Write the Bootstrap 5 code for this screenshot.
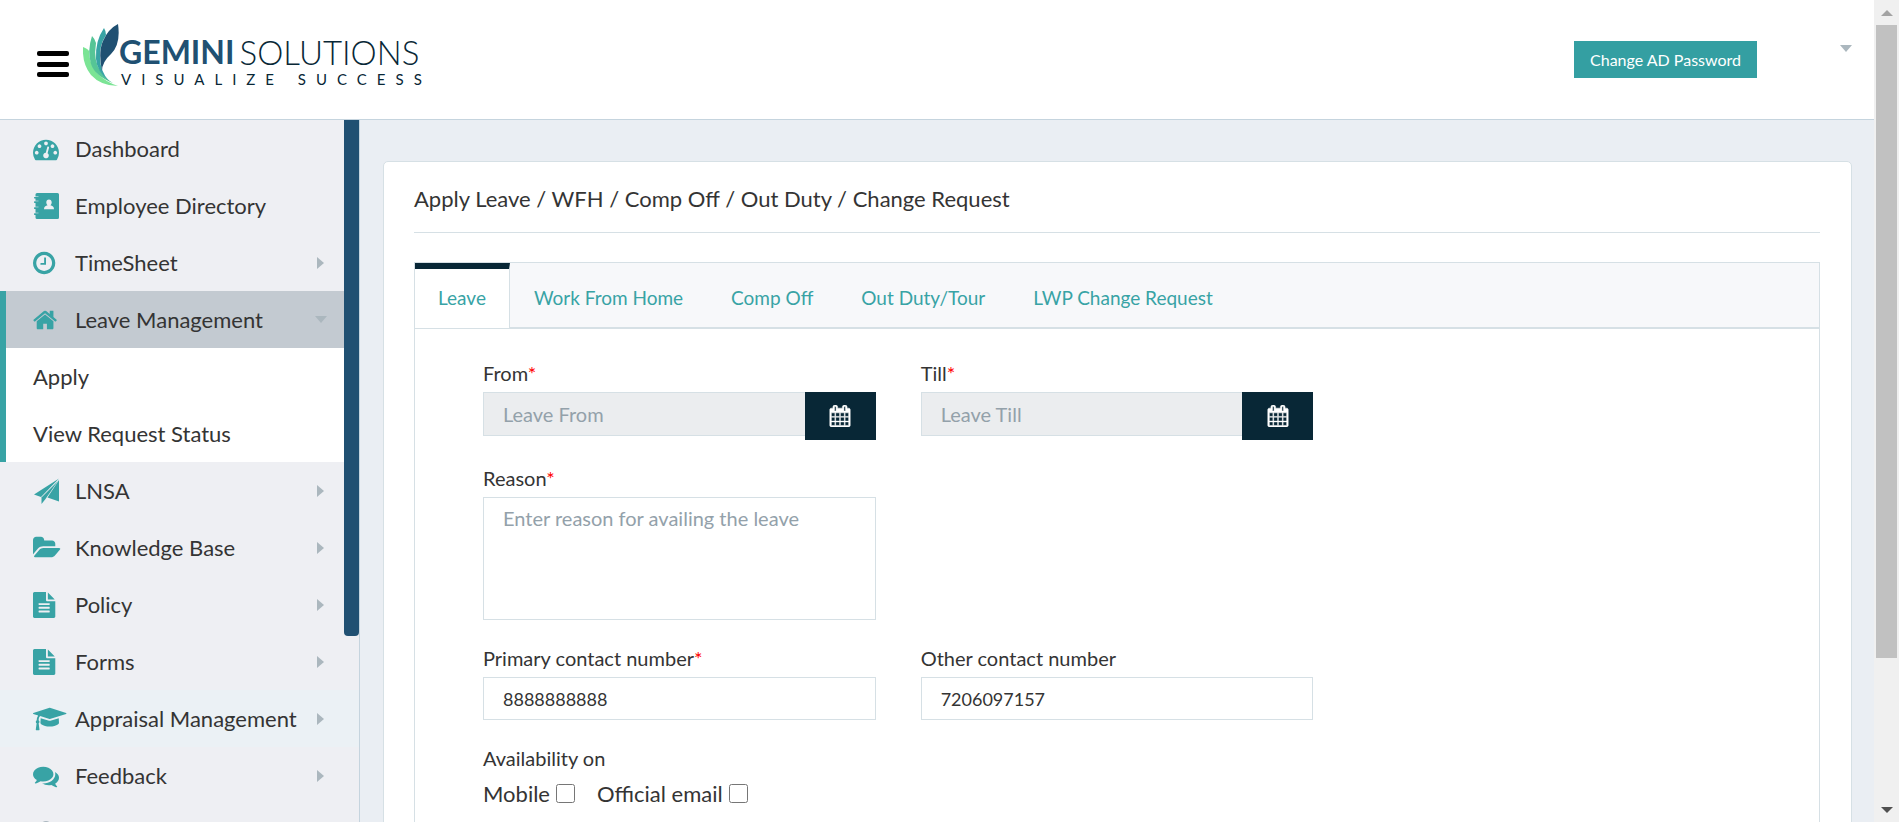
<!DOCTYPE html>
<html lang="en">
<head>
<meta charset="utf-8">
<meta name="viewport" content="width=device-width, initial-scale=1">
<title>Apply Leave - Gemini Solutions</title>
<link href="https://cdn.jsdelivr.net/npm/bootstrap@5.3.0/dist/css/bootstrap.min.css" rel="stylesheet">
<style>
  :root { --teal:#38a3a5; --navy:#205072; --ink:#082736; --line:#d6e0e5; --muted:#abb7be; }
  body { font-family:Lato,"Liberation Sans",sans-serif; font-size:22px; line-height:30px; color:#343434; background:#eaeef3; }
  a { text-decoration:none; color:inherit; }
  .topbar { height:120px; background:#fff; border-bottom:1px solid #c5d4de; padding:0 22px 0 37px; }
  .burger { margin-top:51px; width:32px; height:26px; border:0; background:none; }
  .burger span { height:5px; border-radius:2px; background:#000; }
  .brand { margin:24px 0 0 14px; }
  .brand-leaf { width:36px; height:62px; }
  .brand-name { margin-top:10px; font-size:32px; line-height:36px; color:var(--ink); font-weight:300; gap:5px; }
  .brand-name b { color:var(--navy); font-weight:700; }
  .brand-name span { font-size:33px; }
  .brand-tag { font-size:15px; line-height:18px; letter-spacing:10px; color:var(--ink); padding-left:2px; }
  .btn-ad { margin-top:41px; height:37px; padding:0 16px; border:0; border-radius:0; background:#349fa2; color:#fff; font-size:16px; line-height:35px; }
  .btn-ad:hover { background:#2b8b8e; color:#fff; }
  .user-menu { margin:45px 0 0 83px; height:8px; }
  .caret-d { width:0; height:0; border:6px solid transparent; border-bottom:0; border-top:7px solid var(--muted); }
  .caret-r { width:0; height:0; border:6px solid transparent; border-right:0; border-left:7px solid var(--muted); }
  .side { width:360px; background:#eeeff3; border-right:1px solid #c5d4de; }
  .side-link { height:57px; padding:0 19px 0 33px; }
  .side-link:hover, .side-link.hovered { background:#ebf1f5; }
  .side-link svg { height:26px; width:43px; flex:none; fill:var(--teal); overflow:visible; margin-right:-1px; }
  .side-link svg.dim { fill:var(--muted); }
  .side-open { border-left:6px solid var(--teal); }
  .side-open .side-link { padding-left:27px; background:#fff; }
  .side-open .side-link.opened { background:#c3cad1; padding-right:16px; }
  .side-rail { width:15px; }
  .side-thumb { height:73.5%; background:var(--navy); border-radius:0 0 4px 4px; }
  .panel { background:#fff; border:1px solid var(--line); border-radius:5px; margin:41px 22px 0 23px; padding:22px 31px 60px 30px; }
  .panel-title { font-size:22px; line-height:30px; font-weight:400; padding-bottom:18px; margin:0 0 29px; border-bottom:1px solid var(--line); }
  .tabs { border:1px solid var(--line); border-bottom-width:2px; background:#f7f8fa; }
  .tabs .nav-link { border:0; border-radius:0; height:64px; padding:6px 24px 0; font-size:19px; line-height:58px; color:var(--teal); }
  .tabs .nav-link.active { position:relative; z-index:1; background:#fff; color:var(--teal); padding:0 23px; border-top:6px solid var(--ink); border-right:1px solid var(--line); margin-bottom:-1px; height:65px; }
  .tab-body { border:1px solid var(--line); padding:33px 68px 60px; }
  .tab-body .row { --bs-gutter-x:45px; margin-bottom:27px; }
  .tab-body .cap { display:block; font-size:20px; line-height:22px; margin-bottom:8px; }
  .req { color:#f00; }
  .tab-body .form-control { border-color:var(--line); border-radius:0; font-size:20px; line-height:24px; padding:8px 19px; height:44px; color:#343434; }
  .tab-body .form-control.phone { font-size:18px; height:43px; }
  .tab-body textarea.form-control { height:123px; resize:none; }
  .tab-body .form-control::placeholder { color:#93a1aa; }
  .tab-body .form-control[readonly] { background:#ebedef; border-right:0; }
  .btn-cal { width:71px; height:48px; border:0; border-radius:0; background:var(--ink); flex:none; }
  .btn-cal svg { width:22px; height:22px; fill:#fff; stroke:#fff; stroke-width:40; }
  .avail { column-gap:22px; }
  .avail label { padding-top:2px; }
  .avail > div { column-gap:6px; }
  .tick { width:19px; height:19px; margin:0; }
  .page-scroll { width:25px; background:#f0f0f0; padding:0 2px; }
  .page-scroll .step { height:25px; }
  .page-scroll .grip { height:82%; background:#c1c1c1; }
</style>
</head>
<body>
<div class="d-flex vh-100 overflow-hidden">
  <div class="d-flex flex-column flex-grow-1 overflow-hidden">
    <header class="topbar d-flex align-items-start flex-shrink-0">
      <button class="burger d-flex flex-column justify-content-between p-0" type="button" aria-label="Toggle menu"><span class="w-100"></span><span class="w-100"></span><span class="w-100"></span></button>
      <a href="#" class="brand d-flex">
        <svg class="brand-leaf" viewBox="0 0 36 62">
          <path fill="#7be495" d="M0 23Q5 25 6 27Q6 40 15 50Q23 58 35 62Q18 62 8 51Q-1 40 0 23Z"/>
          <path fill="#56c596" d="M9 12Q12 15 13 19Q10 37 18 48Q23 55 30 59Q12 52 8 40Q4 27 9 12Z"/>
          <path fill="#38a3a5" d="M21 4Q23 7 23 11Q16 22 17 34Q17 47 26 57Q14 48 13 35Q12 17 21 4Z"/>
          <path fill="#205072" d="M35 0Q38 20 28 30Q19 38 19 47Q15 28 20 17Q25 5 35 0Z"/>
        </svg>
        <div>
          <div class="brand-name d-flex"><b>GEMINI</b><span>SOLUTIONS</span></div>
          <div class="brand-tag">VISUALIZE SUCCESS</div>
        </div>
      </a>
      <button type="button" class="btn btn-ad ms-auto">Change AD Password</button>
      <a href="#" class="user-menu" aria-label="User menu"><div class="caret-d"></div></a>
    </header>
    <div class="d-flex flex-grow-1 overflow-hidden">
      <aside class="side d-flex flex-shrink-0 overflow-hidden position-relative">
        <nav class="w-100">
          <a href="#" class="side-link d-flex align-items-center"><svg viewBox="0 0 2964 1792"><path d="M384 1152q0-53-37.500-90.500t-90.500-37.500-90.500 37.500-37.500 90.500 37.500 90.500 90.500 37.500 90.500-37.500 37.500-90.500zm192-448q0-53-37.500-90.500t-90.500-37.500-90.500 37.500-37.500 90.500 37.500 90.500 90.500 37.500 90.500-37.500 37.500-90.500zm428 481l101-382q6-26-7.500-48.500t-38.500-29.500-48 6.500-30 39.500l-101 382q-60 5-107 43.500t-63 98.500q-20 77 20 146t117 89 146-20 89-117q16-60-6-117t-72-91zm660-33q0-53-37.500-90.500t-90.500-37.500-90.500 37.500-37.500 90.500 37.500 90.500 90.500 37.500 90.500-37.500 37.500-90.500zm-640-640q0-53-37.500-90.500t-90.500-37.500-90.500 37.500-37.500 90.500 37.500 90.500 90.500 37.500 90.500-37.500 37.500-90.500zm448 192q0-53-37.500-90.500t-90.500-37.500-90.500 37.500-37.500 90.500 37.500 90.500 90.500 37.500 90.500-37.500 37.500-90.500zm320 448q0 261-141 483-19 29-54 29h-1402q-35 0-54-29-141-221-141-483 0-182 71-348t191-286 286-191 348-71 348 71 286 191 191 286 71 348z"/></svg>Dashboard</a>
          <a href="#" class="side-link d-flex align-items-center"><svg viewBox="0 0 43 26"><path fill-rule="evenodd" d="M4 0H24.500Q26 0 26 1.500V24.500Q26 26 24.500 26H4Q2.500 26 2.500 24.500V22H1.500Q1 22 1 21.200T1.500 20.300H5.500V19.700H2.500V16H1.500Q1 16 1 15.200T1.500 14.300H5.500V13.700H2.500V10H1.500Q1 10 1 9.200T1.500 8.300H5.500V7.700H2.500V5.500H1.500Q1 5.500 1 4.700T1.500 3.900H5.500V3.400H2.500V1.500Q2.500 0 4 0ZM16 6.500C14.300 6.500 13.300 7.800 13.300 9.300C13.300 10.600 13.900 11.600 14.600 12.200C12.500 12.600 11 13.500 11 16.200H21C21 13.500 19.500 12.600 17.400 12.200C18.100 11.600 18.700 10.600 18.700 9.300C18.700 7.800 17.700 6.500 16 6.500Z"/></svg>Employee Directory</a>
          <a href="#" class="side-link d-flex align-items-center"><svg viewBox="128 0 2964 1792"><path d="M1024 544v448q0 14-9 23t-23 9h-320q-14 0-23-9t-9-23v-64q0-14 9-23t23-9h224v-352q0-14 9-23t23-9h64q14 0 23 9t9 23zm416 352q0-148-73-273t-198-198-273-73-273 73-198 198-73 273 73 273 198 198 273 73 273-73 198-198 73-273zm224 0q0 209-103 385.500t-279.500 279.500-385.500 103-385.500-103-279.500-279.500-103-385.500 103-385.500 279.500-279.500 385.500-103 385.500 103 279.500 279.500 103 385.500z"/></svg>TimeSheet<i class="caret-r ms-auto me-3"></i></a>
          <div class="side-open">
            <a href="#" class="side-link opened d-flex align-items-center"><svg viewBox="64 0 2964 1792"><path d="M1472 992v480q0 26-19 45t-45 19h-384v-384h-256v384h-384q-26 0-45-19t-19-45v-480q0-1 .5-3t.5-3l575-474 575 474q1 2 1 6zm223-69l-62 74q-8 9-21 11h-3q-13 0-21-7l-692-577-692 577q-12 8-24 7-13-2-21-11l-62-74q-8-10-7-23.500t11-21.500l719-599q32-26 76-26t76 26l244 204v-195q0-14 9-23t23-9h192q14 0 23 9t9 23v408l219 182q10 8 11 21.500t-7 23.500z"/></svg>Leave Management<i class="caret-d ms-auto me-3"></i></a>
            <a href="#" class="side-link d-flex align-items-center">Apply</a>
            <a href="#" class="side-link d-flex align-items-center">View Request Status</a>
          </div>
          <a href="#" class="side-link d-flex align-items-center"><svg viewBox="0 0 43 26"><path d="M1 16.500L26 0.500L8 19Z"/><path d="M8.500 19.500L25 3L12.500 21L8.500 26Z"/><path d="M26 2V23.500L14.500 19.500Z"/></svg>LNSA<i class="caret-r ms-auto me-3"></i></a>
          <a href="#" class="side-link d-flex align-items-center"><svg viewBox="0 0 2964 1792"><path d="M1879 952q0 31-31 66l-336 396q-43 51-120.500 86.500t-143.500 35.500h-1088q-34 0-60.500-13t-26.500-43q0-31 31-66l336-396q43-51 120.500-86.500t143.500-35.500h1088q34 0 60.500 13t26.500 43zm-343-344v160h-832q-94 0-197 47.500t-164 119.500l-337 396-5 6q0-4-.5-12.500t-.5-12.500v-960q0-92 66-158t158-66h320q92 0 158 66t66 158v32h544q92 0 158 66t66 158z"/></svg>Knowledge Base<i class="caret-r ms-auto me-3"></i></a>
          <a href="#" class="side-link d-flex align-items-center"><svg viewBox="128 0 2964 1792"><path d="M1596 476q14 14 28 36h-472v-472q22 14 36 28zm-476 164h544v1056q0 40-28 68t-68 28h-1344q-40 0-68-28t-28-68v-1600q0-40 28-68t68-28h800v544q0 40 28 68t68 28zm160 736v-64q0-14-9-23t-23-9h-704q-14 0-23 9t-9 23v64q0 14 9 23t23 9h704q14 0 23-9t9-23zm0-256v-64q0-14-9-23t-23-9h-704q-14 0-23 9t-9 23v64q0 14 9 23t23 9h704q14 0 23-9t9-23zm0-256v-64q0-14-9-23t-23-9h-704q-14 0-23 9t-9 23v64q0 14 9 23t23 9h704q14 0 23-9t9-23z"/></svg>Policy<i class="caret-r ms-auto me-3"></i></a>
          <a href="#" class="side-link d-flex align-items-center"><svg viewBox="128 0 2964 1792"><path d="M1596 476q14 14 28 36h-472v-472q22 14 36 28zm-476 164h544v1056q0 40-28 68t-68 28h-1344q-40 0-68-28t-28-68v-1600q0-40 28-68t68-28h800v544q0 40 28 68t68 28zm160 736v-64q0-14-9-23t-23-9h-704q-14 0-23 9t-9 23v64q0 14 9 23t23 9h704q14 0 23-9t9-23zm0-256v-64q0-14-9-23t-23-9h-704q-14 0-23 9t-9 23v64q0 14 9 23t23 9h704q14 0 23-9t9-23zm0-256v-64q0-14-9-23t-23-9h-704q-14 0-23 9t-9 23v64q0 14 9 23t23 9h704q14 0 23-9t9-23z"/></svg>Forms<i class="caret-r ms-auto me-3"></i></a>
          <a href="#" class="side-link hovered d-flex align-items-center"><svg viewBox="0 0 2964 1792"><path d="M1774 836l18 316q4 69-82 128t-235 93.500-323 34.500-323-34.500-235-93.500-82-128l18-316 574 181q22 7 48 7t48-7zm530-324q0 23-22 31l-1120 352q-4 1-10 1t-10-1l-652-206q-43 34-71 111.500t-34 178.500q63 36 63 109 0 69-58 107l58 433q2 14-8 25-9 11-24 11h-192q-15 0-24-11-10-11-8-25l58-433q-58-38-58-107 0-73 65-111 11-207 98-330l-333-104q-22-8-22-31t22-31l1120-352q4-1 10-1t10 1l1120 352q22 8 22 31z"/></svg>Appraisal Management<i class="caret-r ms-auto me-3"></i></a>
          <a href="#" class="side-link d-flex align-items-center"><svg viewBox="0 0 2964 1792"><path d="M1408 768q0 139-94 257t-256.500 186.500-353.500 68.500q-86 0-176-16-124 88-278 128-36 9-86 16h-3q-11 0-20.500-8t-11.500-21q-1-3-1-6.500t.5-6.500 2-6l2.500-5 3.500-5.500 4-5 4.500-5 4-4.500q5-6 23-25t26-29.500 22.500-29 25-38.500 20.500-44q-124-72-195-177t-71-224q0-139 94-257t256.500-186.500 353.500-68.500 353.500 68.500 256.500 186.500 94 257zm384 256q0 120-71 224.500t-195 176.500q10 24 20.500 44t25 38.500 22.500 29 26 29.500 23 25q1 1 4 4.500t4.500 5 4 5 3.500 5.500l2.500 5 2 6 .5 6.500-1 6.500q-3 14-13 22t-22 7q-50-7-86-16-154-40-278-128-90 16-176 16-271 0-472-132 58 4 88 4 161 0 309-45t264-129q125-92 192-212t67-254q0-77-23-152 129 71 204 178t75 230z"/></svg>Feedback<i class="caret-r ms-auto me-3"></i></a>
          <a href="#" class="side-link d-flex align-items-center" aria-label="Profile"><svg class="dim" viewBox="0 0 43 26"><circle cx="13" cy="7" r="6"/><path d="M2 25Q2 14 13 14T24 25Z"/></svg></a>
        </nav>
        <div class="side-rail position-absolute top-0 end-0 h-100"><div class="side-thumb"></div></div>
      </aside>
      <main class="flex-grow-1 overflow-hidden">
        <section class="panel">
          <h1 class="panel-title">Apply Leave / WFH / Comp Off / Out Duty / Change Request</h1>
          <ul class="nav tabs">
            <li class="nav-item"><a class="nav-link active" href="#">Leave</a></li>
            <li class="nav-item"><a class="nav-link" href="#">Work From Home</a></li>
            <li class="nav-item"><a class="nav-link" href="#">Comp Off</a></li>
            <li class="nav-item"><a class="nav-link" href="#">Out Duty/Tour</a></li>
            <li class="nav-item"><a class="nav-link" href="#">LWP Change Request</a></li>
          </ul>
          <form class="tab-body border-top-0">
            <div class="row">
              <div class="col-4">
                <label class="cap" for="from">From<span class="req">*</span></label>
                <div class="d-flex"><input id="from" class="form-control" placeholder="Leave From" readonly><button type="button" class="btn-cal d-flex align-items-center justify-content-center" aria-label="Pick start date"><svg viewBox="0 0 1792 1792"><path id="cal" d="M192 1664h288v-288h-288v288zm352 0h320v-288h-320v288zm-352-352h288v-320h-288v320zm352 0h320v-320h-320v320zm-352-384h288v-288h-288v288zm736 736h320v-288h-320v288zm-384-736h320v-288h-320v288zm768 736h288v-288h-288v288zm-384-352h320v-320h-320v320zm-352-864v-288q0-13-9.500-22.500t-22.500-9.500h-64q-13 0-22.500 9.500t-9.500 22.500v288q0 13 9.500 22.500t22.500 9.500h64q13 0 22.500-9.500t9.500-22.500zm736 864h288v-320h-288v320zm-384-384h320v-288h-320v288zm384 0h288v-288h-288v288zm32-480v-288q0-13-9.500-22.500t-22.500-9.500h-64q-13 0-22.500 9.500t-9.500 22.500v288q0 13 9.500 22.500t22.500 9.500h64q13 0 22.500-9.500t9.500-22.500zm384-64v1280q0 52-38 90t-90 38h-1408q-52 0-90-38t-38-90v-1280q0-52 38-90t90-38h128v-96q0-66 47-113t113-47h64q66 0 113 47t47 113v96h384v-96q0-66 47-113t113-47h64q66 0 113 47t47 113v96h128q52 0 90 38t38 90z"/></svg></button></div>
              </div>
              <div class="col-4">
                <label class="cap" for="till">Till<span class="req">*</span></label>
                <div class="d-flex"><input id="till" class="form-control" placeholder="Leave Till" readonly><button type="button" class="btn-cal d-flex align-items-center justify-content-center" aria-label="Pick end date"><svg viewBox="0 0 1792 1792"><use href="#cal"/></svg></button></div>
              </div>
            </div>
            <div class="row">
              <div class="col-4">
                <label class="cap" for="reason">Reason<span class="req">*</span></label>
                <textarea id="reason" class="form-control" placeholder="Enter reason for availing the leave"></textarea>
              </div>
            </div>
            <div class="row">
              <div class="col-4">
                <label class="cap" for="primary">Primary contact number<span class="req">*</span></label>
                <input id="primary" class="form-control phone" value="8888888888">
              </div>
              <div class="col-4">
                <label class="cap" for="other">Other contact number</label>
                <input id="other" class="form-control phone" value="7206097157">
              </div>
            </div>
            <div class="cap">Availability on</div>
            <div class="avail d-flex">
              <div class="d-flex align-items-center"><label for="mobile">Mobile</label><input type="checkbox" class="tick" id="mobile"></div>
              <div class="d-flex align-items-center"><label for="email">Official email</label><input type="checkbox" class="tick" id="email"></div>
            </div>
          </form>
        </section>
      </main>
    </div>
  </div>
  <div class="page-scroll d-flex flex-column flex-shrink-0" aria-hidden="true">
    <div class="step d-flex align-items-center justify-content-center"><svg width="12" height="6"><path fill="#a3a3a3" d="M6 0L12 6H0Z"/></svg></div>
    <div class="flex-grow-1"><div class="grip"></div></div>
    <div class="step d-flex align-items-center justify-content-center"><svg width="12" height="6"><path fill="#505050" d="M0 0H12L6 6Z"/></svg></div>
  </div>
</div>
<script src="https://cdn.jsdelivr.net/npm/bootstrap@5.3.0/dist/js/bootstrap.bundle.min.js"></script>
</body>
</html>
